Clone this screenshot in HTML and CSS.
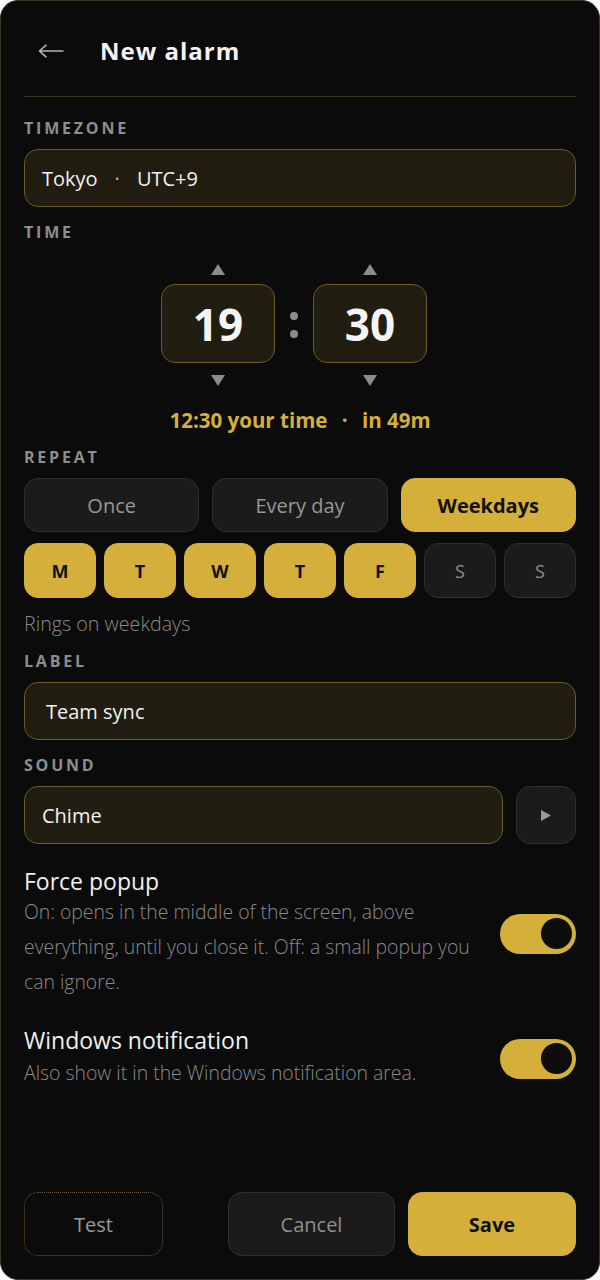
FILE: index.html
```html
<!DOCTYPE html>
<html lang="en">
<head>
<meta charset="utf-8">
<title>New alarm</title>
<link rel="stylesheet" href="styles.css">
</head>
<body>
<div class="window">
  <header class="topbar">
    <button class="back" aria-label="Back">
      <svg width="26" height="14" viewBox="0 0 26 14"><path d="M25 7H1.5M8 1.2L1.5 7L8 12.8" fill="none" stroke="#b5b5b5" stroke-width="1.6" stroke-linecap="round" stroke-linejoin="round"/></svg>
    </button>
    <h1 class="title">New alarm</h1>
  </header>
  <div class="divider"></div>

  <main class="form">
    <section class="field">
      <div class="label">TIMEZONE</div>
      <div class="input">Tokyo <span class="sep">·</span> UTC+9</div>
    </section>

    <section class="field">
      <div class="label">TIME</div>
      <div class="time">
        <div class="spinner">
          <span class="tri up"></span>
          <div class="digits">19</div>
          <span class="tri down"></span>
        </div>
        <div class="colon"><span></span><span></span></div>
        <div class="spinner">
          <span class="tri up"></span>
          <div class="digits">30</div>
          <span class="tri down"></span>
        </div>
      </div>
      <div class="local">12:30 your time <span class="dot">·</span> in 49m</div>
    </section>

    <section class="field">
      <div class="label">REPEAT</div>
      <div class="repeat">
        <button class="chip">Once</button>
        <button class="chip">Every day</button>
        <button class="chip on">Weekdays</button>
      </div>
      <div class="days">
        <button class="day on">M</button>
        <button class="day on">T</button>
        <button class="day on">W</button>
        <button class="day on">T</button>
        <button class="day on">F</button>
        <button class="day">S</button>
        <button class="day">S</button>
      </div>
      <div class="hint">Rings on weekdays</div>
    </section>

    <section class="field">
      <div class="label">LABEL</div>
      <div class="input input-label">Team sync</div>
    </section>

    <section class="field">
      <div class="label">SOUND</div>
      <div class="sound">
        <div class="input grow">Chime</div>
        <button class="play" aria-label="Play">
          <svg width="10" height="11" viewBox="0 0 10 11"><path d="M0 0L10 5.5L0 11Z" fill="#9a9a9a"/></svg>
        </button>
      </div>
    </section>

    <section class="toggle-row first">
      <div class="toggle-text">
        <div class="toggle-title">Force popup</div>
        <div class="toggle-desc">On: opens in the middle of the screen, above everything, until you close it. Off: a small popup you can ignore.</div>
      </div>
      <div class="switch"><span class="knob"></span></div>
    </section>

    <section class="toggle-row">
      <div class="toggle-text">
        <div class="toggle-title">Windows notification</div>
        <div class="toggle-desc short">Also show it in the Windows notification area.</div>
      </div>
      <div class="switch"><span class="knob"></span></div>
    </section>
  </main>

  <footer class="actions">
    <button class="btn test">Test</button>
    <div class="right">
      <button class="btn cancel">Cancel</button>
      <button class="btn save">Save</button>
    </div>
  </footer>
</div>
</body>
</html>
```

FILE: styles.css
```css
* { box-sizing: border-box; }
html, body { margin: 0; padding: 0; background: #ffffff; }
body { font-family: "Open Sans", "Noto Sans", sans-serif; }
button { font-family: inherit; cursor: pointer; }

.window {
  width: 600px;
  height: 1280px;
  background: #0b0b0b;
  border: 1px solid #3b3420;
  border-radius: 18px;
  padding: 0 23px 23px;
  display: flex;
  flex-direction: column;
  overflow: hidden;
}

.topbar {
  height: 95px;
  display: flex;
  align-items: center;
  padding-top: 4px;
}
.back {
  background: none;
  border: 0;
  padding: 0;
  margin-left: 14px;
  width: 26px;
  height: 20px;
  display: flex;
  align-items: center;
}
.title {
  margin: 0 0 0 36px;
  font-size: 24px;
  font-weight: 700;
  letter-spacing: 1px;
  color: #f3f3f3;
}
.divider { height: 1px; background: #3b3420; }

.form { display: flex; flex-direction: column; padding-top: 22px; }
.field { display: flex; flex-direction: column; margin-bottom: 16px; }
.label {
  font-size: 16px;
  line-height: 18px;
  font-weight: 700;
  letter-spacing: 2.8px;
  color: #8e8e8e;
  margin-bottom: 12px;
}

.input {
  height: 58px;
  border: 1px solid #6b5a27;
  background: #211d11;
  border-radius: 14px;
  display: flex;
  align-items: center;
  padding: 0 17px;
  font-size: 20px;
  color: #f1f1f1;
}
.input .sep { margin: 0 17px; color: #bbb; }
.input-label { padding-left: 21px; }

.time { display: flex; justify-content: center; align-items: center; margin-top: 6px; padding-right: 12px; }
.spinner { display: flex; flex-direction: column; align-items: center; }
.tri { width: 0; height: 0; border-left: 7px solid transparent; border-right: 7px solid transparent; }
.tri.up { border-bottom: 11px solid #8c8c8c; margin: 5px 0 9px; }
.tri.down { border-top: 11px solid #8c8c8c; margin: 12px 0 5px; }
.digits {
  width: 114px;
  height: 79px;
  border: 1px solid #6b5a27;
  background: #211d11;
  border-radius: 14px;
  display: flex;
  align-items: center;
  justify-content: center;
  font-size: 44px;
  font-weight: 700;
  color: #f5f5f5;
}
.colon { width: 38px; display: flex; flex-direction: column; align-items: center; gap: 10px; }
.colon span { width: 8px; height: 8px; border-radius: 50%; background: #8c8c8c; }
.local {
  margin-top: 17px;
  text-align: center;
  font-size: 20.5px;
  line-height: 24px;
  font-weight: 700;
  color: #d4b03b;
}
.local .dot { margin: 0 9px; }

.repeat { display: grid; grid-template-columns: repeat(3, 1fr); gap: 13px; }
.chip {
  height: 54px;
  border-radius: 14px;
  border: 1px solid #2d2d2d;
  background: #1b1b1b;
  color: #979797;
  font-size: 20px;
}
.chip.on { background: #d4b03b; border-color: #d4b03b; color: #111; font-weight: 700; }

.days { display: grid; grid-template-columns: repeat(7, 1fr); gap: 8px; margin-top: 11px; }
.day {
  height: 55px;
  border-radius: 14px;
  border: 1px solid #2d2d2d;
  background: #1b1b1b;
  color: #8e8e8e;
  font-size: 18px;
}
.day.on { background: #d4b03b; border-color: #d4b03b; color: #111; font-weight: 700; }

.hint { margin-top: 14px; font-size: 19.7px; line-height: 24px; color: #8a8a8a; font-weight: 300; }

.sound { display: flex; gap: 13px; }
.grow { flex: 1; }
.play {
  width: 60px;
  height: 58px;
  border-radius: 14px;
  border: 1px solid #2d2d2d;
  background: #1b1b1b;
  display: flex;
  align-items: center;
  justify-content: center;
  padding: 0;
}

.toggle-row { display: flex; align-items: center; justify-content: space-between; gap: 24px; margin-top: 28px; }
.toggle-row.first { margin-top: 8px; }
.toggle-text { flex: 1; }
.toggle-title { font-size: 23px; line-height: 26px; color: #f0f0f0; }
.toggle-desc { font-size: 19.4px; line-height: 35px; color: #8a8a8a; font-weight: 300; }
.toggle-desc.short { margin-top: 2px; }
.switch {
  flex: none;
  width: 76px;
  height: 40px;
  border-radius: 20px;
  background: #d4b03b;
  display: flex;
  align-items: center;
  justify-content: flex-end;
  padding: 0 4px;
}
.knob { width: 31px; height: 31px; border-radius: 50%; background: #0d0d0d; }

.actions { margin-top: auto; display: flex; justify-content: space-between; align-items: center; }
.actions .right { display: flex; gap: 13px; }
.btn { height: 64px; border-radius: 14px; font-size: 20px; }
.test { width: 139px; background: transparent; border: 1.5px dotted #6b5a27; color: #999; }
.cancel { width: 167px; background: #1b1b1b; border: 1px solid #2f2f2f; color: #8e8e8e; }
.save { width: 168px; background: #d4b03b; border: 1px solid #d4b03b; color: #111; font-weight: 700; }
```
